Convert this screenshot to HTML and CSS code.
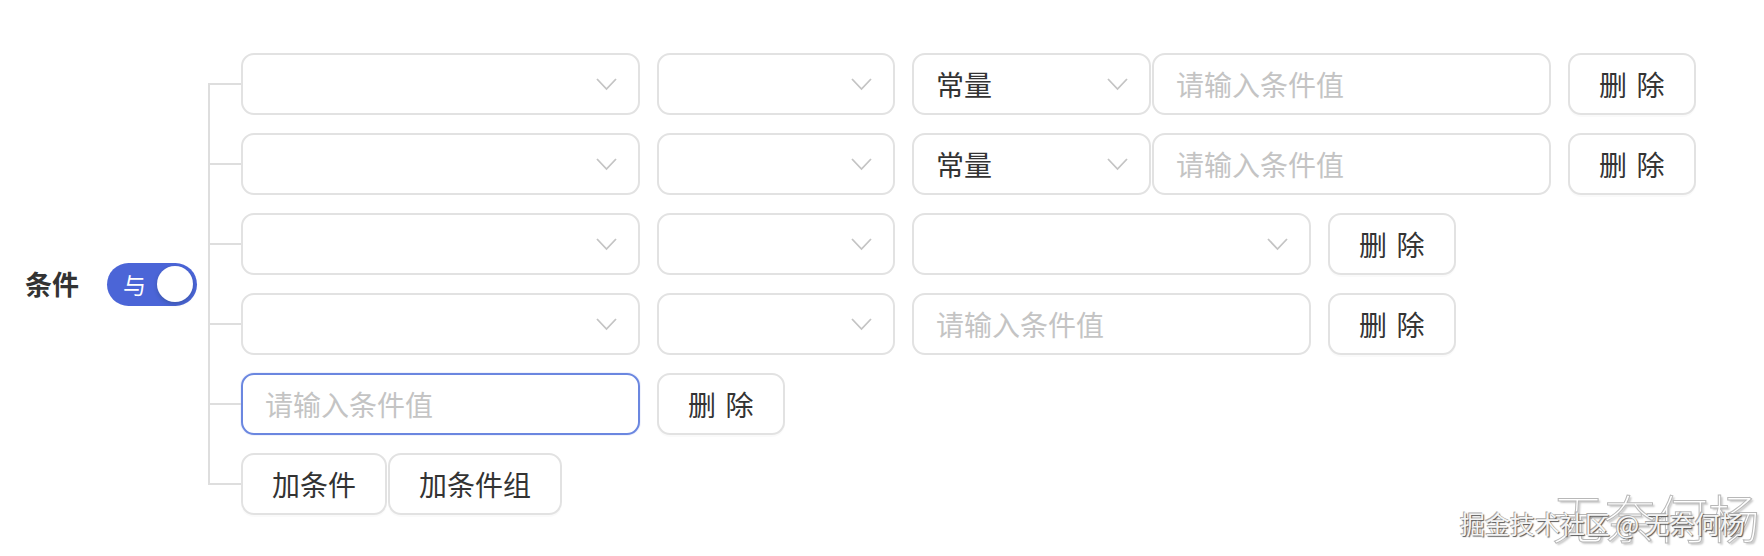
FILE: index.html
```html
<!DOCTYPE html>
<html lang="zh-CN">
<head>
<meta charset="utf-8">
<title>条件</title>
<link rel="stylesheet" href="styles.css">
</head>
<body>
<div class="page">
  <div class="label">条件</div>
  <div class="switch"><span class="switch-text">与</span><span class="knob"></span></div>
  <div class="tree">
    <div class="row">
      <div class="select w-lg"><svg class="arrow" viewBox="0 0 21 14"><polyline points="1,2 10.5,12 20,2"/></svg></div>
      <div class="select w-sm"><svg class="arrow" viewBox="0 0 21 14"><polyline points="1,2 10.5,12 20,2"/></svg></div>
      <div class="pair">
        <div class="select w-md"><span class="value">常量</span><svg class="arrow" viewBox="0 0 21 14"><polyline points="1,2 10.5,12 20,2"/></svg></div>
        <input class="input w-lg" placeholder="请输入条件值">
      </div>
      <button class="btn"><span class="two">删除</span></button>
    </div>
    <div class="row">
      <div class="select w-lg"><svg class="arrow" viewBox="0 0 21 14"><polyline points="1,2 10.5,12 20,2"/></svg></div>
      <div class="select w-sm"><svg class="arrow" viewBox="0 0 21 14"><polyline points="1,2 10.5,12 20,2"/></svg></div>
      <div class="pair">
        <div class="select w-md"><span class="value">常量</span><svg class="arrow" viewBox="0 0 21 14"><polyline points="1,2 10.5,12 20,2"/></svg></div>
        <input class="input w-lg" placeholder="请输入条件值">
      </div>
      <button class="btn"><span class="two">删除</span></button>
    </div>
    <div class="row">
      <div class="select w-lg"><svg class="arrow" viewBox="0 0 21 14"><polyline points="1,2 10.5,12 20,2"/></svg></div>
      <div class="select w-sm"><svg class="arrow" viewBox="0 0 21 14"><polyline points="1,2 10.5,12 20,2"/></svg></div>
      <div class="select w-lg"><svg class="arrow" viewBox="0 0 21 14"><polyline points="1,2 10.5,12 20,2"/></svg></div>
      <button class="btn"><span class="two">删除</span></button>
    </div>
    <div class="row">
      <div class="select w-lg"><svg class="arrow" viewBox="0 0 21 14"><polyline points="1,2 10.5,12 20,2"/></svg></div>
      <div class="select w-sm"><svg class="arrow" viewBox="0 0 21 14"><polyline points="1,2 10.5,12 20,2"/></svg></div>
      <input class="input w-lg" placeholder="请输入条件值">
      <button class="btn"><span class="two">删除</span></button>
    </div>
    <div class="row">
      <input class="input w-lg focused" placeholder="请输入条件值">
      <button class="btn"><span class="two">删除</span></button>
    </div>
    <div class="row">
      <div class="pair">
        <button class="btn">加条件</button>
        <button class="btn">加条件组</button>
      </div>
    </div>
  </div>
</div>
<div class="wm-big">无奈何杨</div>
<div class="wm-small">掘金技术社区 @ 无奈何杨</div>
</body>
</html>
```

FILE: styles.css
```css
html, body {
  margin: 0;
  padding: 0;
  background: #ffffff;
}
body {
  width: 1764px;
  height: 556px;
  position: relative;
  overflow: hidden;
  font-family: "Noto Sans CJK SC", "Noto Sans", sans-serif;
  color: #333333;
}
.page {
  display: flex;
  align-items: center;
  padding: 53px 0 0 25px;
}
.label {
  width: 56px;
  margin-right: 26px;
  font-size: 27px;
  font-weight: 700;
  line-height: 40px;
  color: #333333;
  white-space: nowrap;
}
.switch {
  width: 90px;
  height: 43px;
  border-radius: 22px;
  background: #4b65d7;
  display: flex;
  align-items: center;
  justify-content: space-between;
  padding: 0 4px 0 16px;
  box-sizing: border-box;
  margin-right: 11px;
}
.switch-text {
  color: #ffffff;
  font-size: 23px;
  line-height: 1;
}
.knob {
  width: 36px;
  height: 36px;
  border-radius: 50%;
  background: #ffffff;
  box-shadow: 0 2px 4px rgba(0, 35, 11, 0.2);
}
.tree {
  display: flex;
  flex-direction: column;
  gap: 18px;
}
.row {
  position: relative;
  display: flex;
  align-items: center;
  gap: 17px;
  padding-left: 33px;
  height: 62px;
}
.row::before {
  content: "";
  position: absolute;
  left: 0;
  top: 30px;
  width: 33px;
  border-top: 2px solid #dedede;
}
.row::after {
  content: "";
  position: absolute;
  left: 0;
  top: 30px;
  height: 80px;
  border-left: 2px solid #dedede;
}
.row:last-child::after {
  display: none;
}
.pair {
  display: flex;
  gap: 1px;
}
.select, .input, .btn {
  box-sizing: border-box;
  height: 62px;
  border: 2px solid #e2e2e2;
  border-radius: 13px;
  background: #ffffff;
  font-family: "Noto Sans CJK SC", "Noto Sans", sans-serif;
  font-size: 28px;
  color: #333333;
}
.select {
  display: flex;
  align-items: center;
  padding: 0 21px 0 22px;
}
.value {
  flex: 1;
  line-height: 1;
}
.arrow {
  width: 21px;
  height: 14px;
  margin-left: auto;
  fill: none;
  stroke: #c4c4c4;
  stroke-width: 1.8;
}
.input {
  padding: 0 22px;
  outline: none;
}
.input::placeholder {
  color: #c4c4c4;
}
.input.focused {
  border-color: #6b87e0;
  box-shadow: 0 0 0 1px rgba(75, 101, 215, 0.08);
}
.w-lg { width: 399px; }
.w-md { width: 239px; }
.w-sm { width: 238px; }
.btn {
  padding: 0 29px;
  line-height: 1;
  white-space: nowrap;
  box-shadow: 0 2px 0 rgba(0, 0, 0, 0.02);
  cursor: pointer;
}
.two {
  letter-spacing: 0.34em;
  margin-right: -0.34em;
}
.wm-big {
  position: absolute;
  left: 1552px;
  top: 486px;
  font-family: "Noto Sans CJK SC", sans-serif;
  font-size: 52px;
  font-weight: 300;
  line-height: 1.2;
  color: rgba(255, 255, 255, 0.92);
  -webkit-text-stroke: 1px #b8b8b8;
  text-shadow: 2px 2px 2px rgba(0, 0, 0, 0.22);
  white-space: nowrap;
}
.wm-small {
  position: absolute;
  left: 1460px;
  top: 508px;
  font-family: "Noto Sans CJK SC", sans-serif;
  font-size: 25px;
  line-height: 1.2;
  color: #f4f4f4;
  text-shadow: 1px 1px 1px #555555, -1px -1px 0 #aaaaaa;
  white-space: nowrap;
}
```
